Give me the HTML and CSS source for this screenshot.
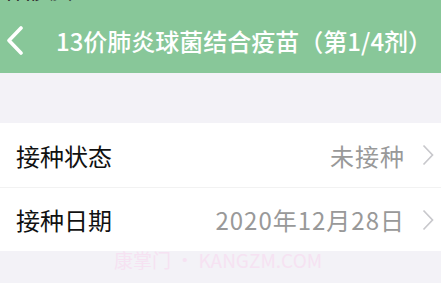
FILE: index.html
```html
<!DOCTYPE html>
<html lang="zh-CN">
<head>
    <meta charset="UTF-8">
    <meta name="viewport" content="width=device-width, initial-scale=1.0">
    <title>疫苗详情</title>
    <link rel="stylesheet" href="styles.css">
</head>
<body>
    <div class="header">
        <div class="status">
            <div class="status-inner">
                <span>中国移动 令</span>
                <span>17:35</span>
                <span>100% <i class="battery"></i></span>
            </div>
        </div>
        <div class="navbar">
            <svg class="back" width="22" height="30" viewBox="0 0 22 30">
                <path d="M17 2 L5 14.5 L17 27" fill="none" stroke="#fff" stroke-width="3.6" stroke-linecap="round" stroke-linejoin="round"/>
            </svg>
            <h1 class="title">13价肺炎球菌结合疫苗（第1/4剂）</h1>
        </div>
    </div>

    <div class="list">
        <div class="row">
            <span class="label">接种状态</span>
            <span class="value">未接种</span>
            <span class="arrow">
                <svg width="12" height="22" viewBox="0 0 12 22"><path d="M1.5 1.5 L10.5 11 L1.5 20.5" fill="none" stroke="#c8c8cc" stroke-width="1.7"/></svg>
            </span>
        </div>
        <div class="row">
            <span class="label">接种日期</span>
            <span class="value">2020年12月28日</span>
            <span class="arrow">
                <svg width="12" height="22" viewBox="0 0 12 22"><path d="M1.5 1.5 L10.5 11 L1.5 20.5" fill="none" stroke="#c8c8cc" stroke-width="1.7"/></svg>
            </span>
        </div>
    </div>

    <div class="watermark">康掌门 • KANGZM.COM</div>
</body>
</html>
```

FILE: styles.css
```css
body {
    margin: 0;
    width: 441px;
    height: 283px;
    overflow: hidden;
    background-color: #f3f2f7;
    font-family: "Noto Sans CJK SC", "Noto Sans", sans-serif;
}

.header {
    background-color: #88c799;
    height: 73px;
}

.status {
    height: 2px;
    overflow: hidden;
}

.status-inner {
    margin-top: -15px;
    height: 16px;
    display: flex;
    justify-content: space-between;
    padding: 0 10px 0 2px;
    font-size: 14px;
    line-height: 16px;
    font-weight: 700;
    color: #333;
}

.battery {
    display: inline-block;
    width: 26px;
    height: 11px;
    border: 1px solid #555;
    border-radius: 3px;
}

.navbar {
    height: 71px;
    display: flex;
    align-items: center;
    padding-top: 6px;
    box-sizing: border-box;
}

.back {
    margin-left: 4px;
    flex-shrink: 0;
}

.title {
    margin: 0 0 0 30px;
    font-size: 24px;
    font-weight: 500;
    color: #fff;
    white-space: nowrap;
}

.list {
    margin-top: 50px;
    background-color: #fff;
}

.row {
    height: 64px;
    display: flex;
    align-items: center;
    padding: 0 7px 0 16px;
    box-sizing: border-box;
}

.row + .row {
    border-top: 1px solid #f2f2f2;
}

.label {
    font-size: 24px;
    color: #111;
    flex: 1;
}

.value {
    font-size: 24px;
    letter-spacing: 1px;
    color: #999;
}

.arrow {
    display: flex;
    margin-left: 17px;
}

.watermark {
    margin-left: 114px;
    font-size: 19px;
    line-height: 18px;
    color: #f6e2f2;
    white-space: nowrap;
}
```
